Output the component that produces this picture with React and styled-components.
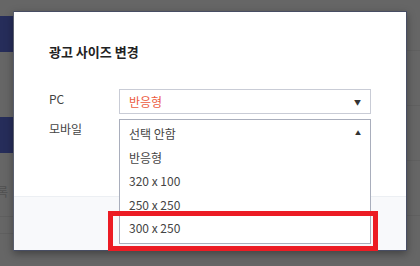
import React from 'react'
import styled, { createGlobalStyle } from 'styled-components';

const GlobalStyle = createGlobalStyle`
    html, body {
        margin:0;
        padding:0;
        background:#666;
    }
    * {
        box-sizing:border-box;
    }
`;

const mobileOptions = ['반응형', '320 x 100', '250 x 250', '300 x 250'];

function App() {
    return (
        <Page>
            <GlobalStyle/>
            <LeftStrip>
                <NavBlock top={16}/>
                <NavBlock top={66}/>
                <FadedText>록</FadedText>
                <FaintLine/>
                <FaintLine/>
            </LeftStrip>
            <Middle/>
            <RightStrip>
                <RowLine/>
                <RowLine/>
                <RowLine/>
                <RowLine/>
            </RightStrip>

            <Modal>
                <ModalBody>
                    <Title>광고 사이즈 변경</Title>
                    <Form>
                        <Label>PC</Label>
                        <SelectBox>
                            <SelectValue accent>반응형</SelectValue>
                            <Arrow>▼</Arrow>
                        </SelectBox>

                        <Label>모바일</Label>
                        <Field>
                            <ListBox>
                                <ListHead>
                                    <SelectValue>선택 안함</SelectValue>
                                    <Arrow up>▲</Arrow>
                                </ListHead>
                                {mobileOptions.map(opt => (
                                    <Option key={opt}>{opt}</Option>
                                ))}
                            </ListBox>
                        </Field>
                    </Form>
                </ModalBody>
                <Footer/>
            </Modal>

            <Highlight/>
        </Page>
    )
}

export default App

const Page = styled.div`
    position:relative;
    width:420px;
    height:266px;
    overflow:hidden;
    background:#666;
    display:grid;
    grid-template-columns:13px 1fr 13px;
    font-family:"Noto Sans CJK KR", "Noto Sans", sans-serif;
`;

const LeftStrip = styled.div`
    display:flex;
    flex-direction:column;
`;

const NavBlock = styled.div`
    height:36px;
    margin-top:${props => props.top === 16 ? '16px' : '65px'};
    background:#262d5a;
`;

const FadedText = styled.div`
    margin-top:31px;
    margin-left:-3px;
    font-size:12px;
    line-height:16px;
    color:#505050;
`;

const FaintLine = styled.div`
    height:1px;
    margin-top:16px;
    background:#5f5f5f;
`;

const Middle = styled.div``;

const RightStrip = styled.div`
    display:flex;
    flex-direction:column;
    padding-top:50px;
    gap:54px;
`;

const RowLine = styled.div`
    height:1px;
    background:#606060;
`;

const Modal = styled.div`
    position:absolute;
    top:11px;
    left:13px;
    width:394px;
    height:240px;
    background:#fff;
    border:1px solid #474d63;
    border-left-color:#5a5f6e;
    box-shadow:0 3px 8px rgba(0,0,0,0.35);
    display:flex;
    flex-direction:column;
`;

const ModalBody = styled.div`
    padding:30px 35px 0 35px;
    position:relative;
    z-index:2;
`;

const Title = styled.h2`
    margin:0;
    font-size:13px;
    line-height:20px;
    font-weight:700;
    color:#222;
`;

const Form = styled.div`
    margin-top:27px;
    display:grid;
    grid-template-columns:70px 252px;
    row-gap:5px;
`;

const Label = styled.div`
    font-size:12px;
    line-height:20px;
    color:#444;
`;

const SelectBox = styled.div`
    height:25px;
    border:1px solid #c9ccd6;
    display:flex;
    align-items:center;
    justify-content:space-between;
    padding:0 9px 0 9px;
`;

const SelectValue = styled.span`
    font-size:12px;
    color:${props => props.accent ? '#ec5b3e' : '#444'};
`;

const Arrow = styled.span`
    font-size:${props => props.up ? '6px' : '7px'};
    color:#333;
    margin-top:${props => props.up ? '-2px' : '0'};
`;

const Field = styled.div`
    position:relative;
    height:25px;
`;

const ListBox = styled.div`
    position:absolute;
    top:0;
    left:0;
    right:0;
    height:125px;
    background:#fff;
    border:1px solid #a9aebc;
    padding-top:2px;
`;

const ListHead = styled.div`
    height:23.5px;
    display:flex;
    align-items:center;
    justify-content:space-between;
    padding:0 9px;
`;

const Option = styled.div`
    height:23.5px;
    line-height:23.5px;
    padding:0 9px;
    font-size:12px;
    color:#444;
`;

const Footer = styled.div`
    margin-top:auto;
    height:54px;
    background:#f8f9fb;
    border-top:1px solid #eceff3;
`;

const Highlight = styled.div`
    position:absolute;
    left:108px;
    top:211px;
    width:270px;
    height:40px;
    border:5px solid #ec1c24;
    z-index:3;
`;
